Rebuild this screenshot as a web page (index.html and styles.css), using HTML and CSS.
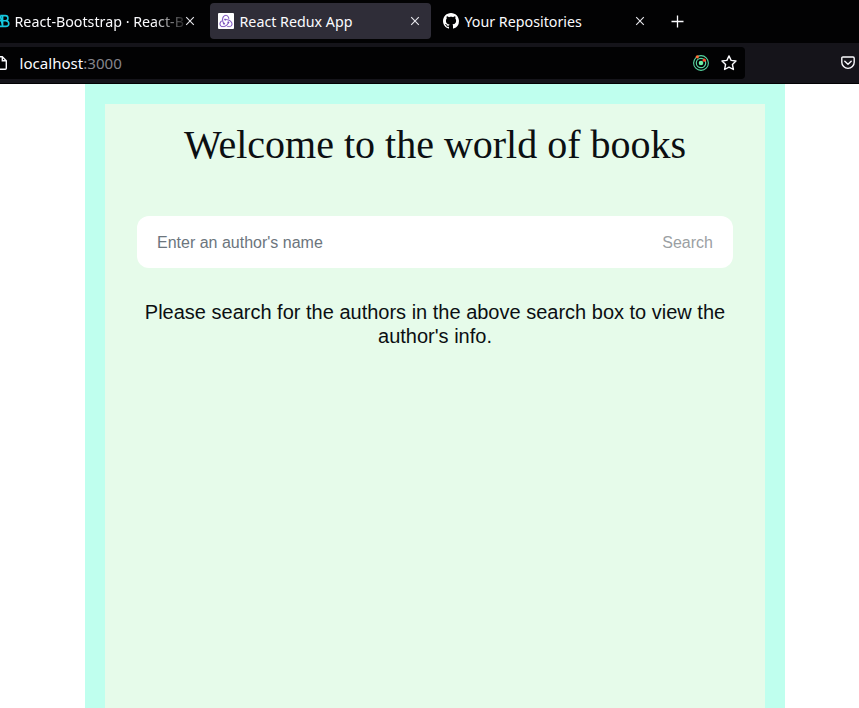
FILE: index.html
```html
<!DOCTYPE html>
<html lang="en">
<head>
<meta charset="utf-8">
<title>React Redux App</title>
<link rel="stylesheet" href="styles.css">
</head>
<body>
<header class="browser">
  <div class="tabs">
    <div class="tab tab-first">
      <svg class="favicon" viewBox="0 0 16 16" fill="none" stroke="#15c8df" stroke-width="1.6"><path d="M8.6 2.6v10.8h3.2c4 0 4-5.2 0-5.6H8.6h2.8c3.4 0 3.4-5.2 0-5.2H6.2M6 7.8h3M6 13.4h3M6.4 3l2.2 10"/></svg>
      <span class="tab-title t1">React-Bootstrap · React-B</span>
      <svg class="close" viewBox="0 0 10 10"><path d="M1.2 1.2l7.6 7.6M8.8 1.2L1.2 8.8"/></svg>
    </div>
    <div class="tab tab-active">
      <svg class="favicon redux" viewBox="-3 -3 30 30" fill="#764abc" stroke="#764abc" stroke-width=".3"><path d="M16.634 16.504c.87-.075 1.543-.84 1.5-1.754-.047-.914-.796-1.648-1.709-1.648h-.061a1.71 1.71 0 00-1.648 1.769c.03.479.226.869.494 1.153-1.048 2.038-2.621 3.535-5.005 4.795-1.603.838-3.296 1.154-4.944.929-1.378-.194-2.456-.81-3.116-1.799-.988-1.499-1.078-3.116-.255-4.734.601-1.166 1.499-2.023 2.099-2.443a9.96 9.96 0 01-.42-1.543C-.868 14.408-.416 18.752.932 20.805c1.004 1.498 3.057 2.456 5.304 2.456.599 0 1.229-.044 1.843-.194 3.897-.749 6.848-3.086 8.541-6.532zm5.348-3.746c-2.32-2.728-5.738-4.226-9.634-4.226h-.51c-.253-.554-.837-.899-1.498-.899h-.045c-.943 0-1.678.81-1.647 1.753.03.898.794 1.648 1.708 1.648h.074a1.69 1.69 0 001.499-1.049h.555c2.309 0 4.495.674 6.488 1.992 1.527 1.005 2.622 2.323 3.237 3.896.538 1.288.509 2.547-.045 3.597-.855 1.647-2.294 2.517-4.196 2.517-1.199 0-2.367-.375-2.967-.644-.36.298-.96.793-1.394 1.093 1.318.598 2.652.943 3.94.943 2.922 0 5.093-1.647 5.918-3.236.898-1.798.824-4.824-1.47-7.416zM6.49 17.042c.03.899.793 1.648 1.708 1.648h.06a1.688 1.688 0 001.648-1.768c0-.9-.779-1.647-1.693-1.647h-.06c-.06 0-.149 0-.226.029-1.243-2.098-1.768-4.347-1.572-6.772.12-1.828.72-3.417 1.797-4.735.899-1.124 2.592-1.679 3.746-1.708 3.236-.061 4.585 3.971 4.689 5.574l1.498.45c-.345-4.914-3.4-7.492-6.322-7.492-2.742 0-5.273 1.993-6.293 4.915-1.398 3.896-.479 7.641 1.229 10.638-.149.195-.239.54-.209.868z"/></svg>
      <span class="tab-title t2">React Redux App</span>
      <svg class="close" viewBox="0 0 10 10"><path d="M1.2 1.2l7.6 7.6M8.8 1.2L1.2 8.8"/></svg>
    </div>
    <div class="tab tab-last">
      <svg class="favicon" viewBox="0 0 16 16" fill="#fff"><path d="M8 0C3.58 0 0 3.58 0 8c0 3.54 2.29 6.53 5.47 7.59.4.07.55-.17.55-.38 0-.19-.01-.82-.01-1.49-2.01.37-2.53-.49-2.69-.94-.09-.23-.48-.94-.82-1.13-.28-.15-.68-.52-.01-.53.63-.01 1.08.58 1.23.82.72 1.21 1.87.87 2.33.66.07-.52.28-.87.51-1.07-1.78-.2-3.64-.89-3.64-3.95 0-.87.31-1.59.82-2.15-.08-.2-.36-1.02.08-2.12 0 0 .67-.21 2.2.82.64-.18 1.32-.27 2-.27s1.36.09 2 .27c1.53-1.04 2.2-.82 2.2-.82.44 1.1.16 1.92.08 2.12.51.56.82 1.27.82 2.15 0 3.07-1.87 3.75-3.65 3.95.29.25.54.73.54 1.48 0 1.07-.01 1.93-.01 2.2 0 .21.15.46.55.38A8.01 8.01 0 0016 8c0-4.42-3.58-8-8-8z"/></svg>
      <span class="tab-title t3">Your Repositories</span>
      <svg class="close" viewBox="0 0 10 10"><path d="M1.2 1.2l7.6 7.6M8.8 1.2L1.2 8.8"/></svg>
    </div>
    <svg class="new-tab" viewBox="0 0 13 13"><path d="M6.5 .5v12M.5 6.5h12"/></svg>
  </div>
  <div class="toolbar">
    <div class="address">
      <svg class="page-icon" viewBox="0 0 8 16"><path d="M0 1.8h2.3l4 4v7.4q0 1-1 1H0M2.3 2v3.8h4"/></svg>
      <span class="url">localhost<span class="port">:3000</span></span>
      <svg class="orbit" viewBox="0 0 16 16" fill="none" stroke="#57d6a0"><circle cx="8" cy="8" r="7.4" stroke-width="1.1"/><circle cx="8" cy="8" r="4.7" stroke-width="1.2"/><circle cx="8" cy="8" r="2.3" fill="#6ff0a4" stroke="none"/><circle cx="4.3" cy="1.8" r="1.6" fill="#ff7139" stroke="none"/><circle cx="11.3" cy="5.2" r="1.6" fill="#ff4f2e" stroke="none"/></svg>
      <svg class="star" viewBox="0 0 16 16"><path d="M8 .9l2.1 4.5 4.9.6-3.6 3.4 1 5.1L8 12.1l-4.4 2.4 1-5.1L1 6l4.9-.6z"/></svg>
    </div>
    <svg class="pocket" viewBox="0 0 14 14"><path d="M2 1h10q1.2 0 1.2 1.2v4a6.2 6.2 0 0 1-12.4 0v-4Q.8 1 2 1zM3.8 5.2L7 8.3l3.2-3.1"/></svg>
  </div>
</header>
<main class="app">
  <h1 class="heading">Welcome to the world of books</h1>
  <form class="search">
    <input class="search-input" type="text" placeholder="Enter an author's name">
    <button class="search-button" type="button" disabled>Search</button>
  </form>
  <p class="hint">Please search for the authors in the above search box to view the author's info.</p>
</main>
</body>
</html>
```

FILE: styles.css
```css
* { box-sizing: border-box; }
body {
  margin: 0;
  height: 708px;
  display: flex;
  flex-direction: column;
  overflow: hidden;
  background: #fff;
  color: #0b0f12;
  font-family: "Liberation Sans", Arial, sans-serif;
}
svg { display: block; flex: none; }
.browser {
  flex: none;
  height: 84px;
  background: #020203;
  color: #fbfbfe;
  font: 14.25px/20px "Noto Sans", sans-serif;
}
.tabs { display: flex; height: 43px; padding-top: 3px; }
.tab {
  display: flex;
  align-items: center;
  height: 36px;
  padding: 0 11px 0 8px;
  border-radius: 4px;
}
.tab-first { width: 206px; padding: 0 11px 0 0; margin-right: 4px; }
.tab-first .favicon { margin-left: -6px; }
.tab-active { width: 221px; background: #2f2d38; margin-right: 4px; }
.tab-last { width: 221px; }
.favicon { width: 16px; height: 16px; }
.redux { background: #fff; border-radius: 1px; }
.tab-title { margin-left: 5.5px; padding-top: 2px; white-space: nowrap; }
.t1 {
  width: 170px;
  margin-left: 4.5px;
  flex: none;
  -webkit-mask-image: linear-gradient(to right, #000 138px, transparent 174px);
  mask-image: linear-gradient(to right, #000 138px, transparent 174px);
}
.close { width: 10px; height: 10px; margin-left: auto; fill: none; stroke: #e8e8ee; stroke-width: 1.1; }
.tab-first .close { margin-left: .5px; }
.new-tab { width: 13px; height: 13px; margin: 12px 0 0 15px; fill: none; stroke: #fbfbfe; stroke-width: 1.3; }
.toolbar {
  display: flex;
  align-items: center;
  height: 40px;
  background: #15141a;
}
.address {
  display: flex;
  align-items: center;
  width: 745px;
  height: 32px;
  padding-right: 8px;
  background: #020203;
  border-radius: 0 4px 4px 0;
}
.page-icon { width: 8px; height: 16px; fill: none; stroke: #fbfbfe; stroke-width: 1.4; }
.url { margin-left: 11.5px; padding-bottom: 1px; font-size: 15.1px; }
.port { color: #85858c; }
.orbit { width: 16px; height: 16px; margin-left: auto; }
.star { width: 16px; height: 16px; margin-left: 12px; fill: none; stroke: #fbfbfe; stroke-width: 1.4; stroke-linejoin: round; }
.pocket { width: 14px; height: 14px; margin-left: 96px; fill: none; stroke: #fbfbfe; stroke-width: 1.4; stroke-linecap: round; stroke-linejoin: round; }
.app {
  flex: 1;
  width: 700px;
  margin-left: 85px;
  padding: 17px 32px 0;
  border: 20px solid #bfffee;
  border-bottom: 0;
  background: #e6fbea;
  text-align: center;
}
.heading {
  margin: 0 0 47px;
  font: 400 40px/48px "Liberation Serif", "Times New Roman", serif;
}
.search {
  display: flex;
  align-items: center;
  height: 52px;
  padding: 2px 20px 0;
  background: #fff;
  border-radius: 12px;
}
.search-input {
  flex: 1;
  min-width: 0;
  padding: 0;
  border: 0;
  outline: 0;
  background: none;
  font: 16px/24px "Liberation Sans", Arial, sans-serif;
}
.search-input::placeholder { color: #6c757d; opacity: 1; }
.search-button {
  padding: 0;
  border: 0;
  background: none;
  color: #9b9fa3;
  font: 16px/24px "Liberation Sans", Arial, sans-serif;
}
.hint { margin: 32px 0 0; font-size: 20px; line-height: 24px; }
```
